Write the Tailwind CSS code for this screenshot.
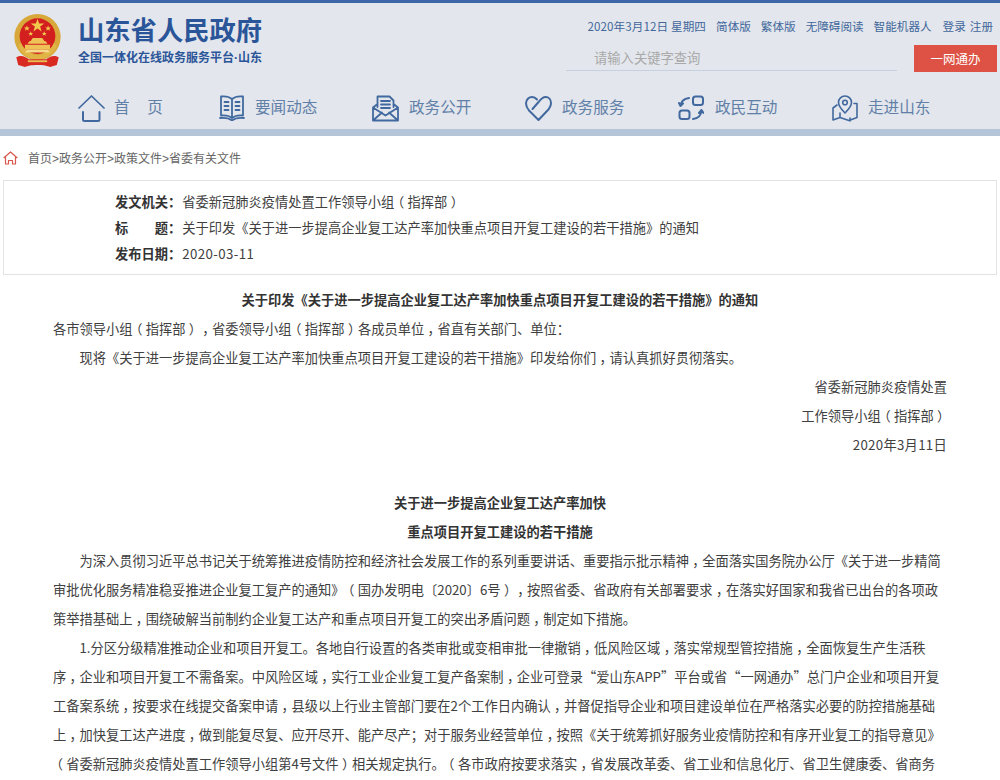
<!DOCTYPE html>
<html lang="zh-CN">
<head>
<meta charset="utf-8">
<title>山东省人民政府</title>
<script src="https://cdn.jsdelivr.net/npm/@tailwindcss/browser@4"></script>
</head>
<body class="bg-white font-['Noto_Sans_CJK_SC','Noto_Sans',sans-serif] text-[#404040] overflow-hidden [text-spacing-trim:space-all]">
<div class="h-[780px] overflow-hidden">
<header class="h-[136px] bg-[#e3e6ec] border-t-[3px] border-[#3d66a8] border-b-[7px] border-b-[#b5c5d8]">
  <div class="h-[82px] flex justify-between">
    <div class="flex pl-[13px] pt-[10px]">
      <svg class="w-[49px] h-[54px]" viewBox="0 0 50 56">
        <circle cx="25" cy="25" r="24" fill="#d8a93a"/>
        <circle cx="25" cy="24" r="18.500" fill="#d3201f"/>
        <path d="M5 34c3 8 9 13 20 15 11-2 17-7 20-15l-3-3c-3 7-8 11-17 13-9-2-14-6-17-13z" fill="#e0b445"/>
        <path d="M3 46c5-3 9-1 13 2h18c4-3 8-5 13-2l-2 8-7 2c-3-1-6-2-13-2s-10 1-13 2l-7-2z" fill="#d92a22"/>
        <path d="M15 49h20v2H15z" fill="#e6bd50"/>
        <path d="M25 6l1.700 5h5.300l-4.300 3.100 1.600 5-4.300-3.100-4.300 3.100 1.600-5-4.300-3.100h5.300z" fill="#f2c94c"/>
        <path d="M14 13l.8 2h2.200l-1.700 1.300.6 2.100-1.900-1.200-1.900 1.200.6-2.100-1.700-1.300h2.200zM36 13l.8 2h2.200l-1.700 1.300.6 2.100-1.900-1.200-1.900 1.200.6-2.100-1.700-1.300h2.200zM18 19l.7 1.700h1.900l-1.500 1.100.5 1.800-1.600-1-1.600 1 .5-1.800-1.500-1.100h1.900zM32 19l.7 1.700h1.900l-1.500 1.100.5 1.800-1.600-1-1.600 1 .5-1.800-1.500-1.100h1.900z" fill="#f2c94c"/>
        <path d="M15 31l2-2h1l2-3h10l2 3h1l2 2v1H15zM12 33h26v5H12z" fill="#eec257"/>
        <path d="M14 38h22l2 3H12z" fill="#f5dc8a"/>
      </svg>
      <div class="ml-[16px] text-[#2a5599] font-bold">
        <div class="text-[26.300px] leading-[32px] whitespace-nowrap">山东省人民政府</div>
        <div class="text-[12px] leading-[16px] mt-[4px] whitespace-nowrap">全国一体化在线政务服务平台<span class="font-['Liberation_Sans']">·</span>山东</div>
      </div>
    </div>
    <div class="w-[434px] pr-[3px] shrink-0">
      <div class="flex justify-end text-[11.600px] leading-[16px] text-[#41679b] pt-[15px] pr-[4px] whitespace-nowrap">
        <span class="mr-[10px] tracking-[0.1px]">2020年3月12日 星期四</span>
        <a class="mr-[10px]">简体版</a>
        <a class="mr-[10px]">繁体版</a>
        <a class="mr-[10px]">无障碍阅读</a>
        <a class="mr-[11px]">智能机器人</a>
        <a class="mr-[4px]">登录</a>
        <a>注册</a>
      </div>
      <div class="flex justify-between mt-[10px]">
        <div class="w-[331px] h-[27px] border-b border-[#c5d1e0] pl-[28px] text-[13.300px] leading-[27px] text-[#a9a9a9]">请输入关键字查询</div>
        <div class="w-[83px] h-[27px] mt-[1px] bg-[#dd5244] text-white text-center text-[12.500px] leading-[27px]">一网通办</div>
      </div>
    </div>
  </div>
  <nav class="flex pl-[78px] h-[38px] pt-[8px] text-[15.600px] leading-[26px] text-[#6180a8]">
    <div class="w-[141px] flex items-center">
      <svg class="w-[27px] h-[27px]" viewBox="0 0 27 27" fill="none" stroke="#41699f" stroke-width="1.700" stroke-linecap="round" stroke-linejoin="round"><path d="M1 13 13.500 1 26 13"/><path d="M5 17v7.500a1.500 1.500 0 0 0 1.500 1.500h13.500a1.500 1.500 0 0 0 1.500-1.500V17" stroke-width="2"/></svg>
      <span class="ml-[9px] pb-[4px] tracking-[1px] whitespace-pre">首　页</span>
    </div>
    <div class="w-[153px] flex items-center">
      <svg class="w-[26px] h-[26px]" viewBox="0 0 26 26" fill="none" stroke="#41699f" stroke-width="1.800" stroke-linecap="round" stroke-linejoin="round"><path d="M13 4C10 1.500 6 1 2 1.500v19c4-.5 8 0 11 2.500 3-2.500 7-3 11-2.500v-19C20 1 16 1.500 13 4zM13 4v19M1 23c4-.5 9 0 12 2.500C16 23 21 22.500 25 23M5.500 7h4M5.500 11h4M5.500 15h4M16.500 7h4M16.500 11h4M16.500 15h4"/></svg>
      <span class="ml-[10px] pb-[4px]">要闻动态</span>
    </div>
    <div class="w-[153px] flex items-center">
      <svg class="w-[27px] h-[27px]" viewBox="0 0 27 27" fill="none" stroke="#41699f" stroke-width="1.800" stroke-linecap="round" stroke-linejoin="round"><path d="M5.500 12V1.500h12l4 4V12M9 6h9M9 9.500h9M9 13h9M5.500 9 1 12.500V25.500h25V12.500L21.500 9M1 12.500l12.500 8 12.500-8M1 25.500l9-8M26 25.500l-9-8"/></svg>
      <span class="ml-[10px] pb-[4px]">政务公开</span>
    </div>
    <div class="w-[153px] flex items-center">
      <svg class="w-[27px] h-[27px]" viewBox="0 0 27 27" fill="none" stroke="#41699f" stroke-width="2" stroke-linecap="round" stroke-linejoin="round"><path d="M7.500 14 14 6.500c2-2.500 4-4.500 6.500-4.500C24 2 26 5 26 8c0 3-1.500 5.500-4 8l-8.500 9L4 15.500C2 13 1 11 1 8.500 1 4.500 4 2 7 2c2 0 3.500.7 5 2.500"/></svg>
      <span class="ml-[10px] pb-[4px]">政务服务</span>
    </div>
    <div class="w-[154px] flex items-center">
      <svg class="w-[26px] h-[26px]" viewBox="0 0 26 26" fill="none" stroke="#41699f" stroke-width="2" stroke-linecap="round" stroke-linejoin="round"><rect x="15" y="1.500" width="10" height="8.500" rx="2.500"/><rect x="1.500" y="15.500" width="10" height="8.500" rx="2.500"/><path d="M11 3C6 3.500 3 6 2.500 11M1 8l1.500 3L5 8.500M15 24c5-.5 8-3 8.500-8.500M21 18l2.500-3 2 3"/></svg>
      <span class="ml-[11px] pb-[4px]">政民互动</span>
    </div>
    <div class="flex items-center">
      <svg class="w-[26px] h-[27px]" viewBox="0 0 26 27" fill="none" stroke="#41699f" stroke-width="1.600" stroke-linecap="round" stroke-linejoin="round"><path d="M13 18C9 14 6.500 11 6.500 7.500a6.500 6.500 0 0 1 13 0C19.500 11 17 14 13 18z"/><circle cx="13" cy="7.500" r="2.300"/><path d="M5 10 1 13v12l7-2.500 9 3 8-3V8.500h-3M8 22.500V18M18 26v-3"/></svg>
      <span class="ml-[10px] pb-[4px]">走进山东</span>
    </div>
  </nav>
</header>
<main class="[&_i]:not-italic [&_i]:[font-feature-settings:'halt'] [&_i]:px-[.25em]">
  <div class="flex items-center h-[44px] pl-[3px] text-[12px] text-[#666]">
    <svg class="w-[15px] h-[14px] mr-[10px]" viewBox="0 0 15 14" fill="none" stroke="#d9574c" stroke-width="1.200" stroke-linejoin="round"><path d="M.7 7 7.500 1l6.800 6M2.500 6v7h3V9.500h4V13h3V6"/></svg>
    <span>首页<span class="font-['Liberation_Sans']">&gt;</span>政务公开<span class="font-['Liberation_Sans']">&gt;</span>政策文件<span class="font-['Liberation_Sans']">&gt;</span>省委有关文件</span>
  </div>
  <section class="mx-[3px] h-[95px] border border-[#e3e3e3] pl-[111px] pt-[8px] text-[13.250px] leading-[26px]">
    <div><b class="font-bold text-[#333] mr-[1px]">发文机关：</b>省委新冠肺炎疫情处置工作领导小组<i>（</i>指挥部<i>）</i></div>
    <div><b class="font-bold text-[#333] mr-[1px] whitespace-pre">标　　题：</b>关于印发《关于进一步提高企业复工达产率加快重点项目开复工建设的若干措施》的通知</div>
    <div><b class="font-bold text-[#333] mr-[1px]">发布日期：</b><span class="tracking-[0.4px]">2020-03-11</span></div>
  </section>
  <article class="px-[53px] pt-[10px] text-[13.250px] leading-[29px]">
    <h1 class="text-center font-bold text-[#333]">关于印发《关于进一步提高企业复工达产率加快重点项目开复工建设的若干措施》的通知</h1>
    <p>各市领导小组<i>（</i>指挥部<i>）</i><i>，</i>省委领导小组<i>（</i>指挥部<i>）</i>各成员单位<i>，</i>省直有关部门、单位：</p>
    <p class="indent-[2em]">现将《关于进一步提高企业复工达产率加快重点项目开复工建设的若干措施》印发给你们<i>，</i>请认真抓好贯彻落实。</p>
    <p class="text-right">省委新冠肺炎疫情处置</p>
    <p class="text-right">工作领导小组<i>（</i>指挥部<i>）</i></p>
    <p class="text-right"><span class="tracking-[0.3px]">2020年3月11日</span></p>
    <div class="h-[29px]"></div>
    <h2 class="text-center font-bold text-[#333]">关于进一步提高企业复工达产率加快</h2>
    <h2 class="text-center font-bold text-[#333]">重点项目开复工建设的若干措施</h2>
    <p class="indent-[2em]">为深入贯彻习近平总书记关于统筹推进疫情防控和经济社会发展工作的系列重要讲话、重要指示批示精神<i>，</i>全面落实国务院办公厅《关于进一步精简<br>审批优化服务精准稳妥推进企业复工复产的通知》<i>（</i>国办发明电〔2020〕6号<i>）</i><i>，</i>按照省委、省政府有关部署要求<i>，</i>在落实好国家和我省已出台的各项政<br>策举措基础上<i>，</i>围绕破解当前制约企业复工达产和重点项目开复工的突出矛盾问题<i>，</i>制定如下措施。</p>
    <p class="indent-[2em]">1.分区分级精准推动企业和项目开复工。各地自行设置的各类审批或变相审批一律撤销<i>，</i>低风险区域<i>，</i>落实常规型管控措施<i>，</i>全面恢复生产生活秩<br>序<i>，</i>企业和项目开复工不需备案。中风险区域<i>，</i>实行工业企业复工复产备案制<i>，</i>企业可登录“爱山东APP”平台或省“一网通办”总门户企业和项目开复<br>工备案系统<i>，</i>按要求在线提交备案申请<i>，</i>县级以上行业主管部门要在2个工作日内确认<i>，</i>并督促指导企业和项目建设单位在严格落实必要的防控措施基础<br>上<i>，</i>加快复工达产进度<i>，</i>做到能复尽复、应开尽开、能产尽产；对于服务业经营单位<i>，</i>按照《关于统筹抓好服务业疫情防控和有序开业复工的指导意见》<br><i>（</i>省委新冠肺炎疫情处置工作领导小组第4号文件<i>）</i>相关规定执行。<i>（</i>各市政府按要求落实<i>，</i>省发展改革委、省工业和信息化厅、省卫生健康委、省商务</p>
  </article>
</main>
</div>
</body>
</html>
